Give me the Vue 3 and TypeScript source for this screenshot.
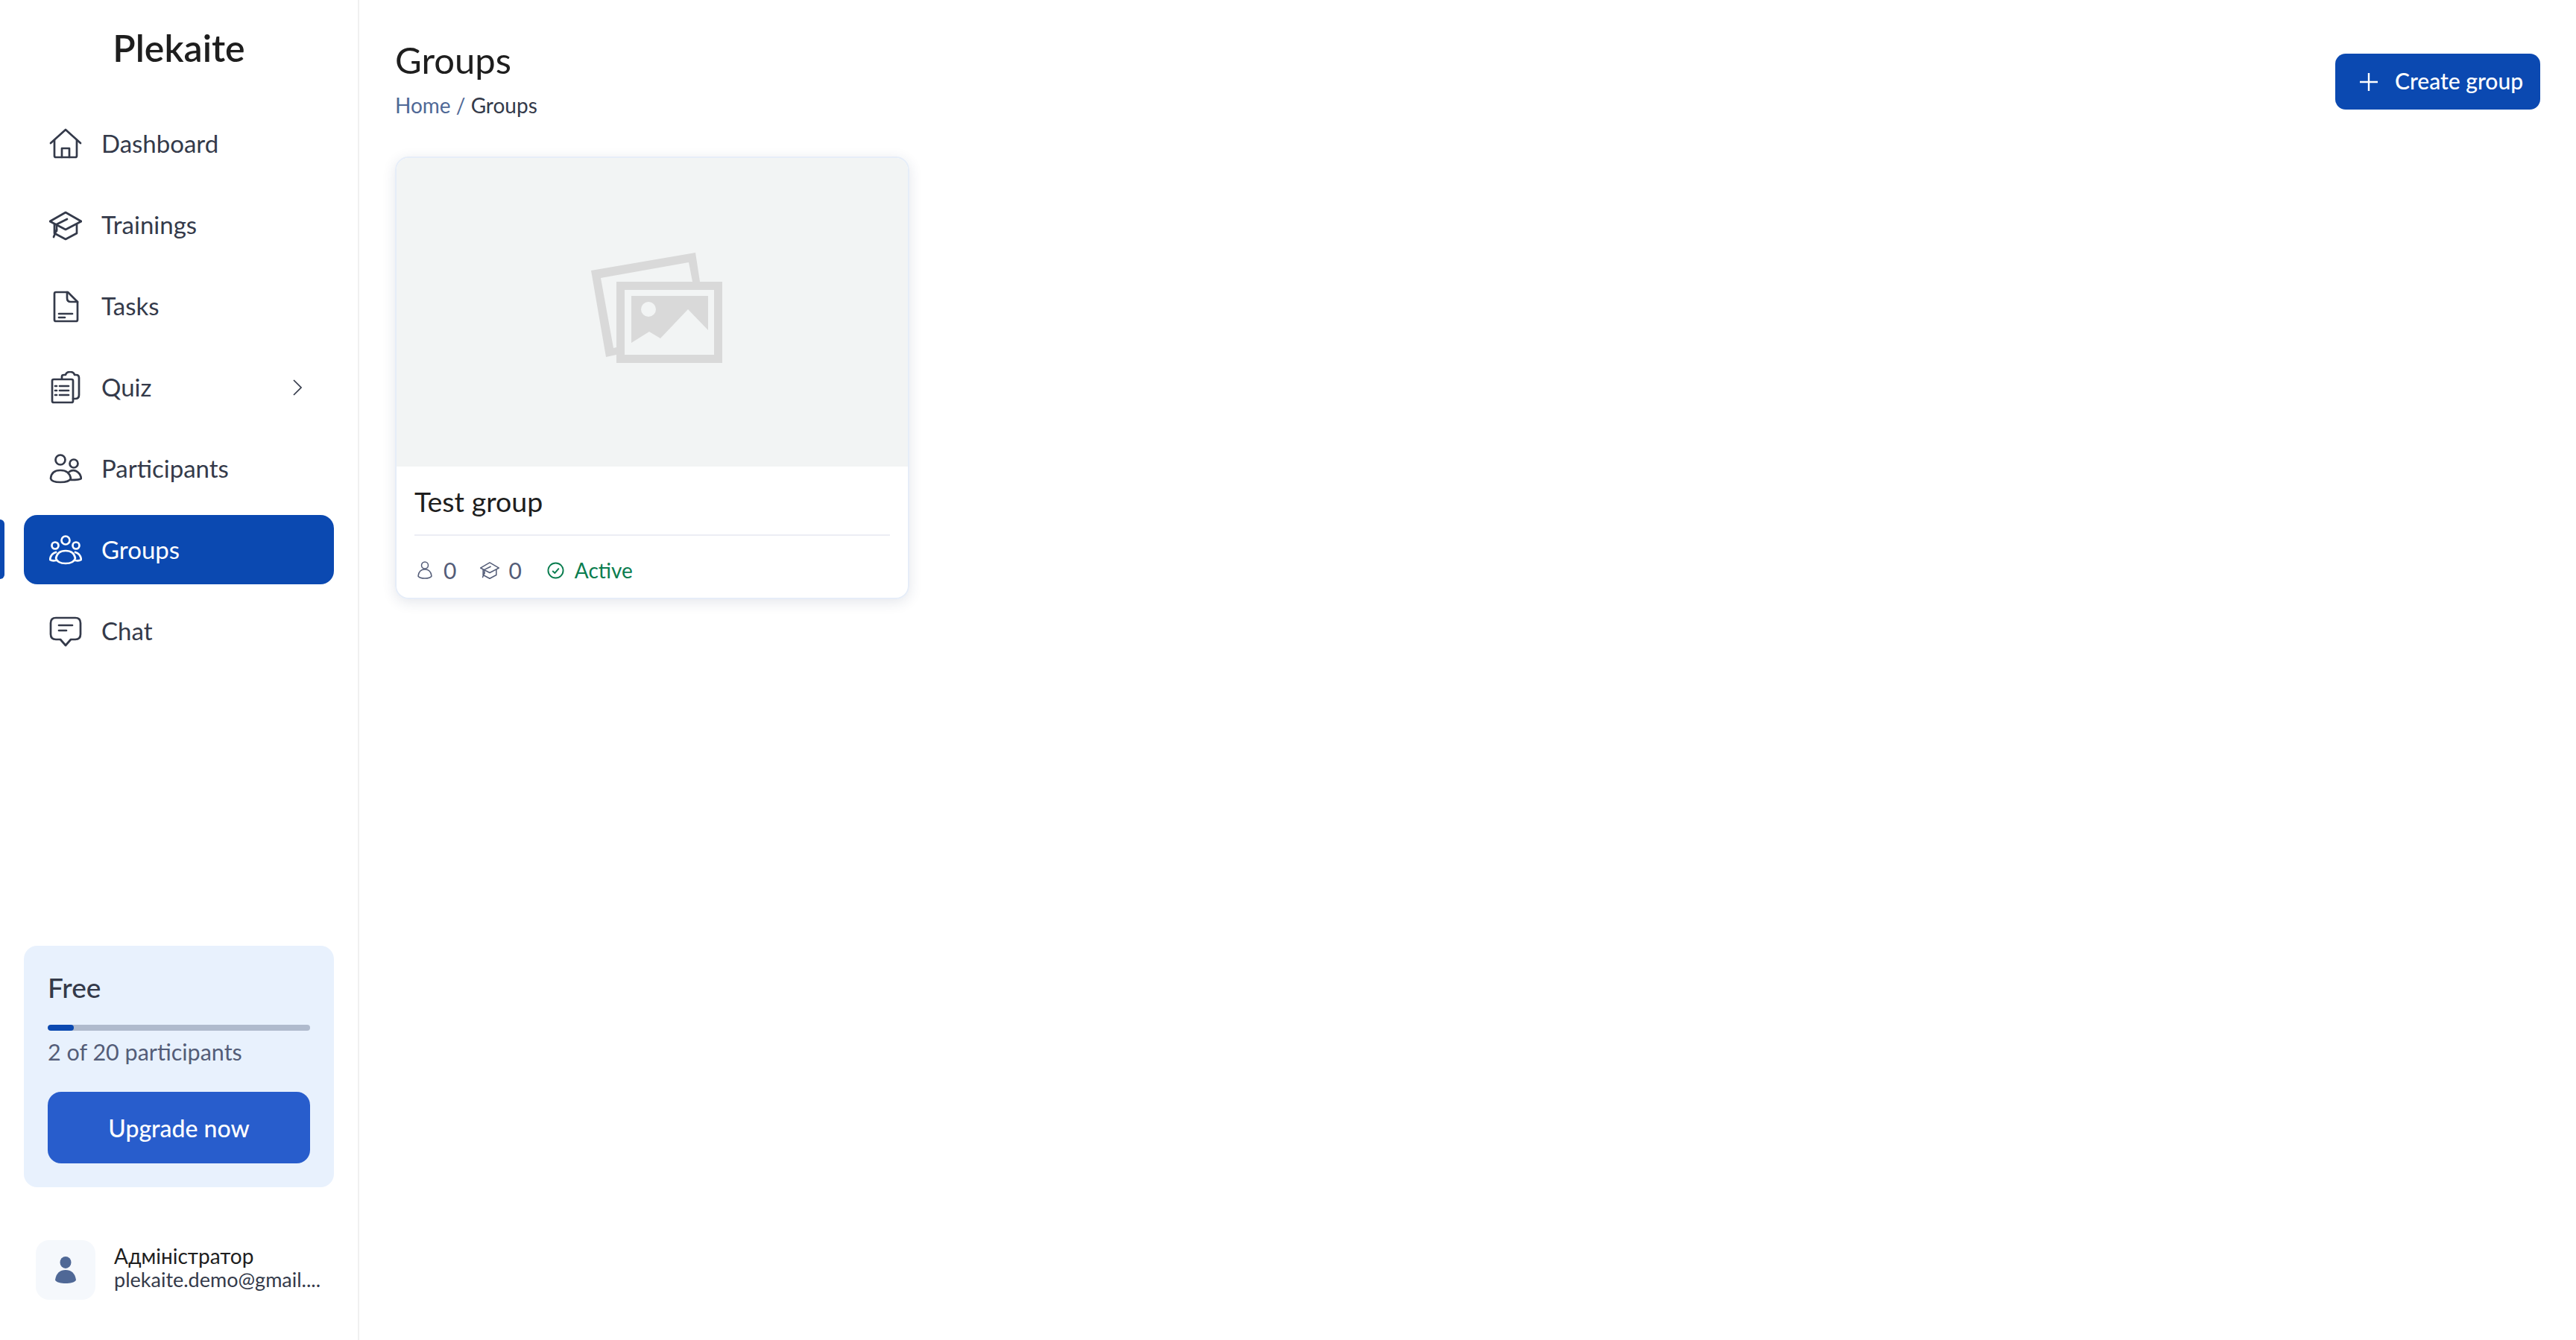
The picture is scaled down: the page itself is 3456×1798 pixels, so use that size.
<script setup lang="ts">
interface NavItem {
  label: string
  paths: string[]
  active?: boolean
  chevron?: boolean
}

const circle = (cx: number, cy: number, r: number): string =>
  `M${cx - r} ${cy}a${r} ${r} 0 1 0 ${2 * r} 0a${r} ${r} 0 1 0 ${-2 * r} 0Z`

const capPaths: string[] = [
  'M22 5 L43 17 L22 28 L1 17 Z',
  'M7 21 V33 L22 41 L37 33 V21',
  'M24 14 L10 21 V30',
  'M10 28 L6 38',
]

const items: NavItem[] = [
  {
    label: 'Dashboard',
    paths: ['M2 21 L22 3 L42 21', 'M7 17 V38 Q7 40 9 40 H35 Q37 40 37 38 V17', 'M17 40 V28 H27 V40'],
  },
  { label: 'Trainings', paths: capPaths },
  {
    label: 'Tasks',
    paths: [
      'M9 3 H25 L38 16 V40 Q38 42 36 42 H9 Q7 42 7 40 V5 Q7 3 9 3 Z',
      'M24 3 V11 Q24 16 29 16 H38',
      'M13 32 H31',
      'M13 37 H21',
    ],
  },
  {
    label: 'Quiz',
    chevron: true,
    paths: [
      'M6 11 H30 Q32 11 32 13 V40 Q32 42 30 42 H6 Q4 42 4 40 V13 Q4 11 6 11 Z',
      'M17 10 V7 Q17 5 20 5 H22 Q23 1 28 1 Q33 1 34 5 H36 Q40 5 40 9 V32 Q40 37 35 37 H32',
      'M14 20 H26',
      'M14 26 H26',
      'M14 32 H26',
      'M8 20 H10',
      'M8 26 H10',
      'M8 32 H10',
    ],
  },
  {
    label: 'Participants',
    paths: [
      circle(15, 10, 6.5),
      circle(33, 15, 5.5),
      'M2 35 Q3 24 15 24 Q27 24 29 35 Q27 40 15 40 Q3 40 2 35 Z',
      'M27 26 Q31 23 36 25 Q42 28 43 35 Q41 37 29 37',
    ],
  },
  {
    label: 'Groups',
    active: true,
    paths: [
      circle(22, 9, 5.5),
      circle(8, 16, 4.5),
      circle(36, 16, 4.5),
      'M9 33 Q11 23 22 23 Q33 23 35 33 Q33 40 22 40 Q11 40 9 33 Z',
      'M9 25 Q2 27 1 35 Q4 37 9 36',
      'M35 25 Q42 27 43 35 Q40 37 35 36',
    ],
  },
  {
    label: 'Chat',
    paths: [
      'M9 4 H35 Q42 4 42 11 V26 Q42 33 35 33 H29 L22 41 L15 33 H9 Q2 33 2 26 V11 Q2 4 9 4 Z',
      'M13 14 H31',
      'M13 21 H23',
    ],
  },
]
</script>

<template>
  <div class="app">
    <aside class="sidebar">
      <div class="logo">Plekaite</div>
      <nav class="nav">
        <a v-for="item in items" :key="item.label" class="nav-item" :class="{ active: item.active }">
          <span v-if="item.active" class="indicator"></span>
          <svg class="nav-icon" viewBox="0 0 44 44" fill="none" stroke="currentColor" stroke-width="2.7" stroke-linecap="round" stroke-linejoin="round">
            <path v-for="d in item.paths" :key="d" :d="d" />
          </svg>
          <span class="nav-label">{{ item.label }}</span>
          <svg v-if="item.chevron" class="chevron" viewBox="0 0 12 22" fill="none" stroke="currentColor" stroke-width="1.7">
            <path d="M1 1 L11 11 L1 21" />
          </svg>
        </a>
      </nav>

      <section class="plan">
        <div class="plan-name">Free</div>
        <div class="progress"><div class="progress-fill" :style="{ width: '10%' }"></div></div>
        <div class="plan-count">2 of 20 participants</div>
        <button class="upgrade">Upgrade now</button>
      </section>

      <div class="user">
        <div class="avatar">
          <svg viewBox="0 0 28 34" width="28" height="36" preserveAspectRatio="none" fill="#4f6896">
            <circle cx="14" cy="7.5" r="7.5" />
            <path d="M0 30 C1 21 7 17 14 17 C21 17 27 21 28 30 C26 33 20 34 14 34 C8 34 2 33 0 30 Z" />
          </svg>
        </div>
        <div class="user-text">
          <div class="user-name">Адміністратор</div>
          <div class="user-mail">plekaite.demo@gmail....</div>
        </div>
      </div>
    </aside>

    <main class="main">
      <header class="header">
        <div class="heading">
          <h1 class="title">Groups</h1>
          <div class="crumbs"><span class="crumb-link">Home / </span><span>Groups</span></div>
        </div>
        <button class="create">
          <svg viewBox="0 0 24 24" width="24" height="24" fill="none" stroke="currentColor" stroke-width="2.4"><path d="M12 0 V24 M0 12 H24" /></svg>
          <span>Create group</span>
        </button>
      </header>

      <article class="card">
        <div class="thumb">
          <svg class="placeholder" viewBox="23 19 176 148" width="176" height="148">
            <path fill="#d9d9d9" fill-rule="evenodd" d="M23 43 L163 19 L169 58 L159 58 L154 32 L36 53 L53 147 L57 146 L57 156 L43 159 Z" />
            <path fill="#d9d9d9" fill-rule="evenodd" d="M57 58 H199 V167 H57 Z M68 69 V156 H188 V69 Z" />
            <path fill="#d9d9d9" d="M77 77 H180 V123 L153 95 L116 134 L101 125 L77 140 Z" />
            <circle cx="100" cy="95" r="10" fill="#f2f4f4" />
          </svg>
        </div>
        <div class="card-body">
          <h2 class="card-title">Test group</h2>
          <div class="divider"></div>
          <div class="meta">
            <span class="meta-item people">
              <svg viewBox="0 0 20 24" width="20" height="24" fill="none" stroke="currentColor" stroke-width="1.5">
                <circle cx="10" cy="5.5" r="4.5" />
                <path d="M1 20 Q2 11 10 11 Q18 11 19 20 Q17 23 10 23 Q3 23 1 20 Z" />
              </svg>
              <span>0</span>
            </span>
            <span class="meta-item courses">
              <svg viewBox="0 0 44 44" width="26" height="26" fill="none" stroke="currentColor" stroke-width="2.6" stroke-linejoin="round" stroke-linecap="round">
                <path v-for="d in capPaths" :key="d" :d="d" />
              </svg>
              <span>0</span>
            </span>
            <span class="meta-item status">
              <svg viewBox="0 0 24 24" width="23" height="23" fill="none" stroke="currentColor" stroke-width="2">
                <circle cx="12" cy="12" r="10.5" />
                <path d="M7.5 12.5 L10.8 15.5 L16.5 9" />
              </svg>
              <span class="status-text">Active</span>
            </span>
          </div>
        </div>
      </article>
    </main>
  </div>
</template>

<style>
html,
body {
  margin: 0;
  background: #fff;
}
</style>

<style scoped>
.app {
  display: flex;
  height: 1798px;
  overflow: hidden;
  font-family: "Lato", "Noto Sans", sans-serif;
  color: #343a4a;
  background: #fff;
}
.sidebar {
  box-sizing: border-box;
  width: 482px;
  flex: none;
  display: flex;
  flex-direction: column;
  border-right: 2px solid #f0f0f0;
  padding-bottom: 54px;
}
.logo {
  height: 128px;
  padding-bottom: 2px;
  display: flex;
  align-items: center;
  justify-content: center;
  font-size: 50px;
  font-weight: 600;
  color: #1e1e1e;
  margin-bottom: 16px;
}
.nav {
  display: flex;
  flex-direction: column;
  gap: 16px;
}
.nav-item {
  position: relative;
  box-sizing: border-box;
  height: 93px;
  margin: 0 32px;
  width: 416px;
  padding: 0 43px 2px 34px;
  display: flex;
  align-items: center;
  gap: 26px;
  border-radius: 18px;
  font-size: 33px;
  color: #343a4a;
}
.nav-item.active {
  background: #0b49b1;
  color: #fff;
}
.indicator {
  position: absolute;
  left: -32px;
  top: 6px;
  width: 6px;
  height: 80px;
  background: #0b49b1;
  border-radius: 0 6px 6px 0;
}
.nav-icon {
  width: 44px;
  height: 44px;
  flex: none;
  transform: translateY(1px);
}
.chevron {
  width: 12px;
  height: 22px;
  margin-left: auto;
  transform: translateY(1px);
}
.plan {
  margin: auto 32px 71px;
  box-sizing: border-box;
  height: 324px;
  padding: 35px 32px 32px;
  background: #e8f1fd;
  border-radius: 18px;
  display: flex;
  flex-direction: column;
}
.plan-name {
  font-size: 37px;
  line-height: 42px;
  font-weight: 500;
}
.progress {
  margin-top: 29px;
  height: 8px;
  border-radius: 4px;
  background: #afbacd;
  overflow: hidden;
}
.progress-fill {
  height: 100%;
  border-radius: 4px;
  background: #0b49b1;
}
.plan-count {
  margin-top: 8px;
  font-size: 30.5px;
  line-height: 40px;
  color: #545d78;
}
.upgrade {
  margin-top: 34px;
  height: 96px;
  border: 0;
  border-radius: 18px;
  background: #285dcc;
  color: #fff;
  font: 500 32px "Lato", "Noto Sans", sans-serif;
}
.user {
  margin: 0 16px 0 48px;
  display: flex;
  align-items: center;
  gap: 25px;
}
.avatar {
  width: 80px;
  height: 80px;
  flex: none;
  display: flex;
  align-items: center;
  justify-content: center;
  background: #f5f8fc;
  border-radius: 18px;
}
.user-text {
  min-width: 0;
  margin-top: -6px;
}
.user-name {
  font-size: 28px;
  line-height: 32px;
  color: #1e1e1e;
}
.user-mail {
  font-size: 27px;
  line-height: 32px;
  color: #343a4a;
  white-space: nowrap;
}
.main {
  flex: 1;
  min-width: 0;
  padding: 50px 48px 0;
}
.header {
  display: flex;
  justify-content: space-between;
  align-items: center;
  margin-bottom: 41px;
}
.heading {
  padding-bottom: 5px;
}
.title {
  margin: 0;
  font-size: 49px;
  line-height: 60px;
  font-weight: 400;
  color: #1e1e1e;
}
.crumbs {
  margin-top: 9px;
  font-size: 28px;
  line-height: 45px;
}
.crumb-link {
  color: #4f6896;
  white-space: pre;
}
.create {
  box-sizing: border-box;
  width: 275px;
  height: 75px;
  padding: 0 0 4px 33px;
  display: flex;
  align-items: center;
  gap: 23px;
  border: 0;
  border-radius: 14px;
  background: #0b49b1;
  color: #fff;
  font: 500 30px "Lato", "Noto Sans", sans-serif;
  white-space: nowrap;
}
.create svg {
  flex: none;
  transform: translateY(2px);
}
.card {
  box-sizing: border-box;
  width: 690px;
  height: 594px;
  border: 2px solid #e6edf8;
  border-radius: 18px;
  overflow: hidden;
  box-shadow: 0 4px 18px rgba(30, 50, 90, 0.12);
}
.thumb {
  box-sizing: border-box;
  height: 414px;
  padding: 0 0 12px 12px;
  display: flex;
  align-items: center;
  justify-content: center;
  background: #f2f4f4;
}
.card-body {
  padding: 22px 24px 16px;
}
.card-title {
  margin: 0;
  font-size: 37.5px;
  line-height: 50px;
  font-weight: 400;
  color: #1e1e1e;
}
.divider {
  margin-top: 19px;
  height: 2px;
  background: #ecedf4;
}
.meta {
  margin-top: 26px;
  height: 40px;
  display: flex;
  align-items: center;
  font-size: 30px;
  color: #545d78;
}
.meta-item {
  display: flex;
  align-items: center;
}
.people {
  margin-left: 4px;
  gap: 15px;
}
.courses {
  margin-left: 32px;
  gap: 12px;
}
.status {
  margin-left: 34px;
  gap: 14px;
  color: #0a7d4f;
}
.status-text {
  font-size: 28px;
}
</style>
